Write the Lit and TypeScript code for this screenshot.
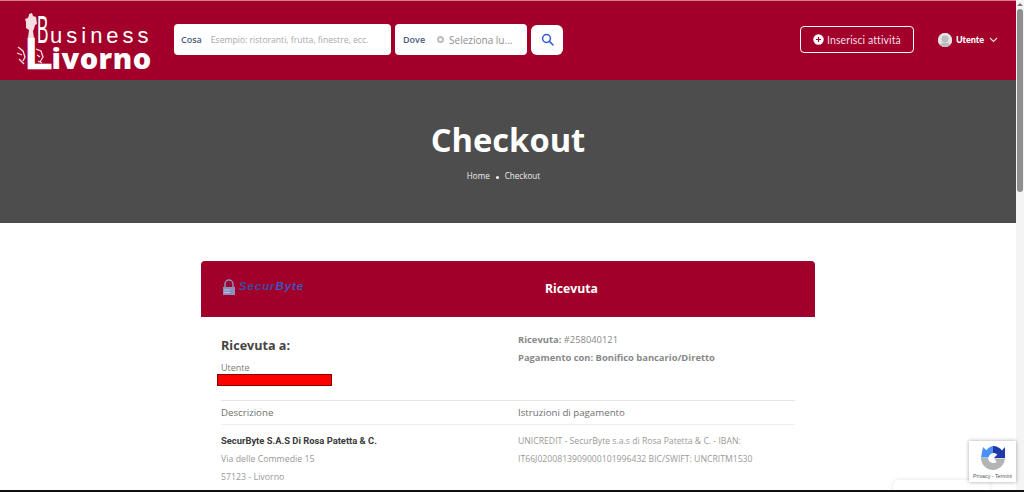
import { LitElement, html, css } from "lit";
import { customElement } from "lit/decorators.js";

@customElement("app-root")
export class AppRoot extends LitElement {
  static styles = css`
    :host { display: block; height: 492px; overflow: hidden; font-family: "Open Sans", sans-serif; background: #fff; color: #888; }
    .shell { display: flex; height: 490px; border-bottom: 2px solid #111; overflow: hidden; position: relative; }
    .page { width: 1016px; flex: none; overflow: hidden; }
    .scroll { width: 8px; flex: none; background: #f4f4f4; display: flex; flex-direction: column; align-items: center; padding-top: 3px; box-sizing: border-box; gap: 3px; }
    .arrow { width: 0; height: 0; border-left: 3px solid transparent; border-right: 3px solid transparent; border-bottom: 3px solid #777; }
    .thumb { width: 6px; height: 183px; background: #8f8f8f; border-radius: 3px; }
    header { height: 80px; background: #a2002b; border-top: 1px solid #d9808f; box-sizing: border-box; display: flex; align-items: center; }
    .logo { width: 174px; flex: none; height: 79px; position: relative; box-sizing: border-box; padding-top: 13px; color: #fff; font-family: "Liberation Sans", sans-serif; }
    .mark { position: absolute; left: 16px; top: 10px; width: 28px; height: 60px; }
    .r1 { display: flex; align-items: baseline; height: 32px; line-height: 32px; margin-left: 37px; white-space: nowrap; }
    .bb { display: inline-block; font-size: 39px; transform: scaleX(.44); transform-origin: 0 50%; margin-right: -13px; }
    .us { font-size: 22px; letter-spacing: 4px; }
    .r2 { display: flex; align-items: baseline; height: 33px; line-height: 33px; margin: -9px 0 0 25px; white-space: nowrap; }
    .ll { font-size: 45px; font-weight: 700; -webkit-text-stroke: .5px #fff; margin-right: -1px; }
    .iv { font-family: "Open Sans", sans-serif; font-size: 29px; font-weight: 800; letter-spacing: .5px; }
    .search { display: flex; gap: 4px; align-items: center; margin-top: -2px; }
    .box { height: 31px; background: #fff; border-radius: 4px; display: flex; align-items: center; box-sizing: border-box; font-size: 8.6px; white-space: nowrap; }
    .cosa { width: 217px; padding-left: 7px; }
    .dove { width: 132px; padding-left: 8px; }
    .lab { color: #4a5a80; font-weight: 600; font-size: 9px; }
    .cosa .lab { margin-right: 9px; }
    .ph { color: #a8a8a8; }
    .dove .lab { margin-right: 12px; }
    .dot { width: 7px; height: 7px; box-sizing: border-box; border: 2px solid #b8bec2; border-radius: 50%; margin-right: 5px; }
    .dove .ph { font-size: 10px; color: #8e8e8e; }
    .go { width: 32px; height: 30px; background: #fff; border-radius: 6px; display: flex; align-items: center; justify-content: center; }
    .go svg { display: block; }
    .right { margin-left: auto; display: flex; align-items: center; margin-top: -2px; }
    .add { width: 114px; height: 27px; box-sizing: border-box; border: 1px solid #fff; border-radius: 4px; color: #f4dfe4; font-family: "Lato", sans-serif; font-size: 10.5px; letter-spacing: .1px; display: flex; align-items: center; justify-content: center; gap: 3px; }
    .user { display: flex; align-items: center; margin-left: 24px; margin-right: 18px; color: #fff; font-family: "Lato", sans-serif; font-size: 9px; font-weight: 900; }
    .ava { width: 14px; height: 14px; border-radius: 50%; background: #ddd; margin-right: 4px; overflow: hidden; display: block; }
    .user .chev { margin-left: 5px; }
    .hero { height: 143px; background: #4d4d4d; color: #fff; display: flex; flex-direction: column; align-items: center; }
    h1 { margin: 37px 0 0; font-size: 32.7px; line-height: 45px; font-weight: 700; }
    .crumb { display: flex; align-items: center; font-size: 8.1px; line-height: 12px; margin: 8px 9px 0 0; color: #eee; }
    .sep { width: 3px; height: 3px; border-radius: 50%; background: #fff; margin: 3px 6px 0 6px; }
    .wrap { padding: 38px 0 0 201px; }
    .card { width: 614px; }
    .head { height: 56px; background: #a0002a; border-radius: 4px 4px 0 0; display: grid; grid-template-columns: 297px 1fr; color: #fff; box-sizing: border-box; }
    .sb { display: flex; align-items: flex-start; padding: 18px 0 0 21px; }
    .sbt { font-family: "Liberation Sans", sans-serif; font-style: italic; font-weight: 700; font-size: 11.5px; color: #3f4aa0; margin: 0 0 0 3px; line-height: 14px; letter-spacing: .9px; }
    .sbt span { color: #3f55bc; }
    .tit { font-size: 12.2px; font-weight: 700; padding: 13px 0 0 47px; line-height: 30px; }
    .body { padding: 0 20px; }
    .info { display: grid; grid-template-columns: 297px 1fr; height: 83px; }
    h3 { margin: 19px 0 0; font-size: 12.6px; line-height: 20px; font-weight: 700; color: #444; }
    .ut { font-size: 9px; line-height: 12px; color: #777; margin-top: 6px; }
    .red { position: relative; left: -4px; width: 115px; height: 12px; background: #f00; border: 1px solid #8a0000; box-sizing: border-box; }
    .meta { padding-top: 14px; font-size: 9.4px; line-height: 18px; color: #888; }
    .meta b { font-weight: 700; }
    .cols { display: grid; grid-template-columns: 297px 1fr; border-top: 1px solid #e6e6e6; border-bottom: 1px solid #efefef; height: 25px; box-sizing: border-box; font-size: 9.7px; line-height: 24px; color: #707070; }
    .rows { display: grid; grid-template-columns: 297px 1fr; color: #999; padding-top: 7px; }
    .rows b { display: block; font-family: Roboto, sans-serif; font-size: 9.4px; font-weight: 700; color: #3a3a3a; line-height: 18px; }
    .rows .p { line-height: 18px; font-size: 8.67px; }
    .rows .addr span { display: block; line-height: 18px; font-size: 8.8px; }
    .recaptcha { position: absolute; left: 969px; top: 441px; width: 47px; height: 41px; background: #fff; box-shadow: 0 0 4px rgba(0,0,0,.35); display: flex; flex-direction: column; align-items: center; }
    .recaptcha svg { margin-top: 4px; }
    .recaptcha span { font-family: "Liberation Sans", sans-serif; font-size: 5.3px; color: #555; line-height: 8px; margin-top: 1px; white-space: nowrap; }
    .chat { position: absolute; left: 893px; top: 480px; width: 97px; height: 12px; background: #fff; border-radius: 6px 6px 0 0; box-shadow: 0 0 4px rgba(0,0,0,.12); }
  `;

  render() {
    return html`<div class="shell">
      <div class="page">
        <header>
          <div class="logo">
            <svg class="mark" viewBox="0 0 28 60">
              <path fill="#f6dfe3" d="M13 3l3-1 1 3 3 1 1 7-2 1-1 4-1 2 1 7h-6l1-8-3-2 0-6-1-3 3-1 1-3z"/>
              <path stroke="#f6dfe3" stroke-width="1.3" fill="none" d="M2 36l5 4 2 6-2 4M1 42l5 2M3 48l5 5M20 38l5 2 2 6-3 5M21 44l3 2M22 50l4 2"/>
            </svg>
            <div class="r1"><span class="bb">B</span><span class="us">usiness</span></div>
            <div class="r2"><span class="ll">L</span><span class="iv">ivorno</span></div>
          </div>
          <div class="search">
            <div class="box cosa"><span class="lab">Cosa</span><span class="ph">Esempio: ristoranti, frutta, finestre, ecc.</span></div>
            <div class="box dove"><span class="lab">Dove</span><span class="dot"></span><span class="ph">Seleziona lu...</span></div>
            <div class="go"><svg width="13" height="13" viewBox="0 0 13 13" fill="none" stroke="#2f5bd0" stroke-width="1.5"><circle cx="5.5" cy="5.5" r="3.9"/><path d="M8.4 8.4l3.6 3.6" stroke-linecap="round"/></svg></div>
          </div>
          <div class="right">
            <div class="add">
              <svg width="11" height="11" viewBox="0 0 11 11"><circle cx="5.5" cy="5.5" r="5.2" fill="#fff"/><path d="M5.5 3v5M3 5.5h5" stroke="#a2002b" stroke-width="1.2"/></svg>
              <span>Inserisci attività</span>
            </div>
            <div class="user">
              <svg class="ava" viewBox="0 0 14 14"><rect width="14" height="14" fill="#e4e4e4"/><circle cx="7" cy="6" r="3.5" fill="#bdbdbd"/><ellipse cx="7" cy="14" rx="6" ry="4.5" fill="#bdbdbd"/></svg>
              <span>Utente</span>
              <svg class="chev" width="9" height="6" viewBox="0 0 9 6" fill="none" stroke="#f4dfe4" stroke-width="1.1"><path d="M1 1l3.5 3.5L8 1"/></svg>
            </div>
          </div>
        </header>
        <section class="hero">
          <h1>Checkout</h1>
          <div class="crumb"><span>Home</span><i class="sep"></i><span>Checkout</span></div>
        </section>
        <div class="wrap">
          <div class="card">
            <div class="head">
              <div class="sb">
                <svg width="14" height="17" viewBox="0 0 14 17"><path d="M3 8V5a4 4 0 0 1 8 0v3" fill="none" stroke="#8a8fc0" stroke-width="1.5"/><rect x="1" y="8" width="12" height="8" fill="#8a8fc0"/><path d="M2 11h6M2 13.5h6" stroke="#c8c8e0" stroke-width=".8"/></svg>
                <span class="sbt">Secur<span>Byte</span></span>
              </div>
              <div class="tit">Ricevuta</div>
            </div>
            <div class="body">
              <div class="info">
                <div>
                  <h3>Ricevuta a:</h3>
                  <div class="ut">Utente</div>
                  <div class="red"></div>
                </div>
                <div class="meta">
                  <div><b>Ricevuta:</b> #258040121</div>
                  <div><b>Pagamento con: Bonifico bancario/Diretto</b></div>
                </div>
              </div>
              <div class="cols"><span>Descrizione</span><span>Istruzioni di pagamento</span></div>
              <div class="rows">
                <div class="addr"><b>SecurByte S.A.S Di Rosa Patetta &amp; C.</b><span>Via delle Commedie 15</span><span>57123 - Livorno</span></div>
                <div class="p">UNICREDIT - SecurByte s.a.s di Rosa Patetta &amp; C. - IBAN:<br>IT66J0200813909000101996432 BIC/SWIFT: UNCRITM1530</div>
              </div>
            </div>
          </div>
        </div>
      </div>
      <div class="scroll"><i class="arrow"></i><i class="thumb"></i></div>
      <div class="chat"></div>
      <div class="recaptcha">
        <svg width="26" height="26" viewBox="0 0 26 26">
          <path fill="#b4b4b4" d="M1 13h7c.3 2.800 2.500 5 5 5 1.500 0 2.800-.6 3.700-1.600L14 13.500h11C24.500 20 19 25 13 25 6.500 25 1 19.500 1 13z"/>
          <path fill="#4a90f5" d="M3 2l3.300 3.300C8 3.300 10.300 1.500 13 1v7c-2 .2-4 2-4.500 4.500H1z"/>
          <path fill="#1c3aa9" d="M13 1c3.600 0 6.800 1.700 9 4.400L25 2v11H14l3.400-3.400C16.300 8.500 14.800 8 13 8z"/>
        </svg>
        <span>Privacy - Termini</span>
      </div>
    </div>`;
  }
}
